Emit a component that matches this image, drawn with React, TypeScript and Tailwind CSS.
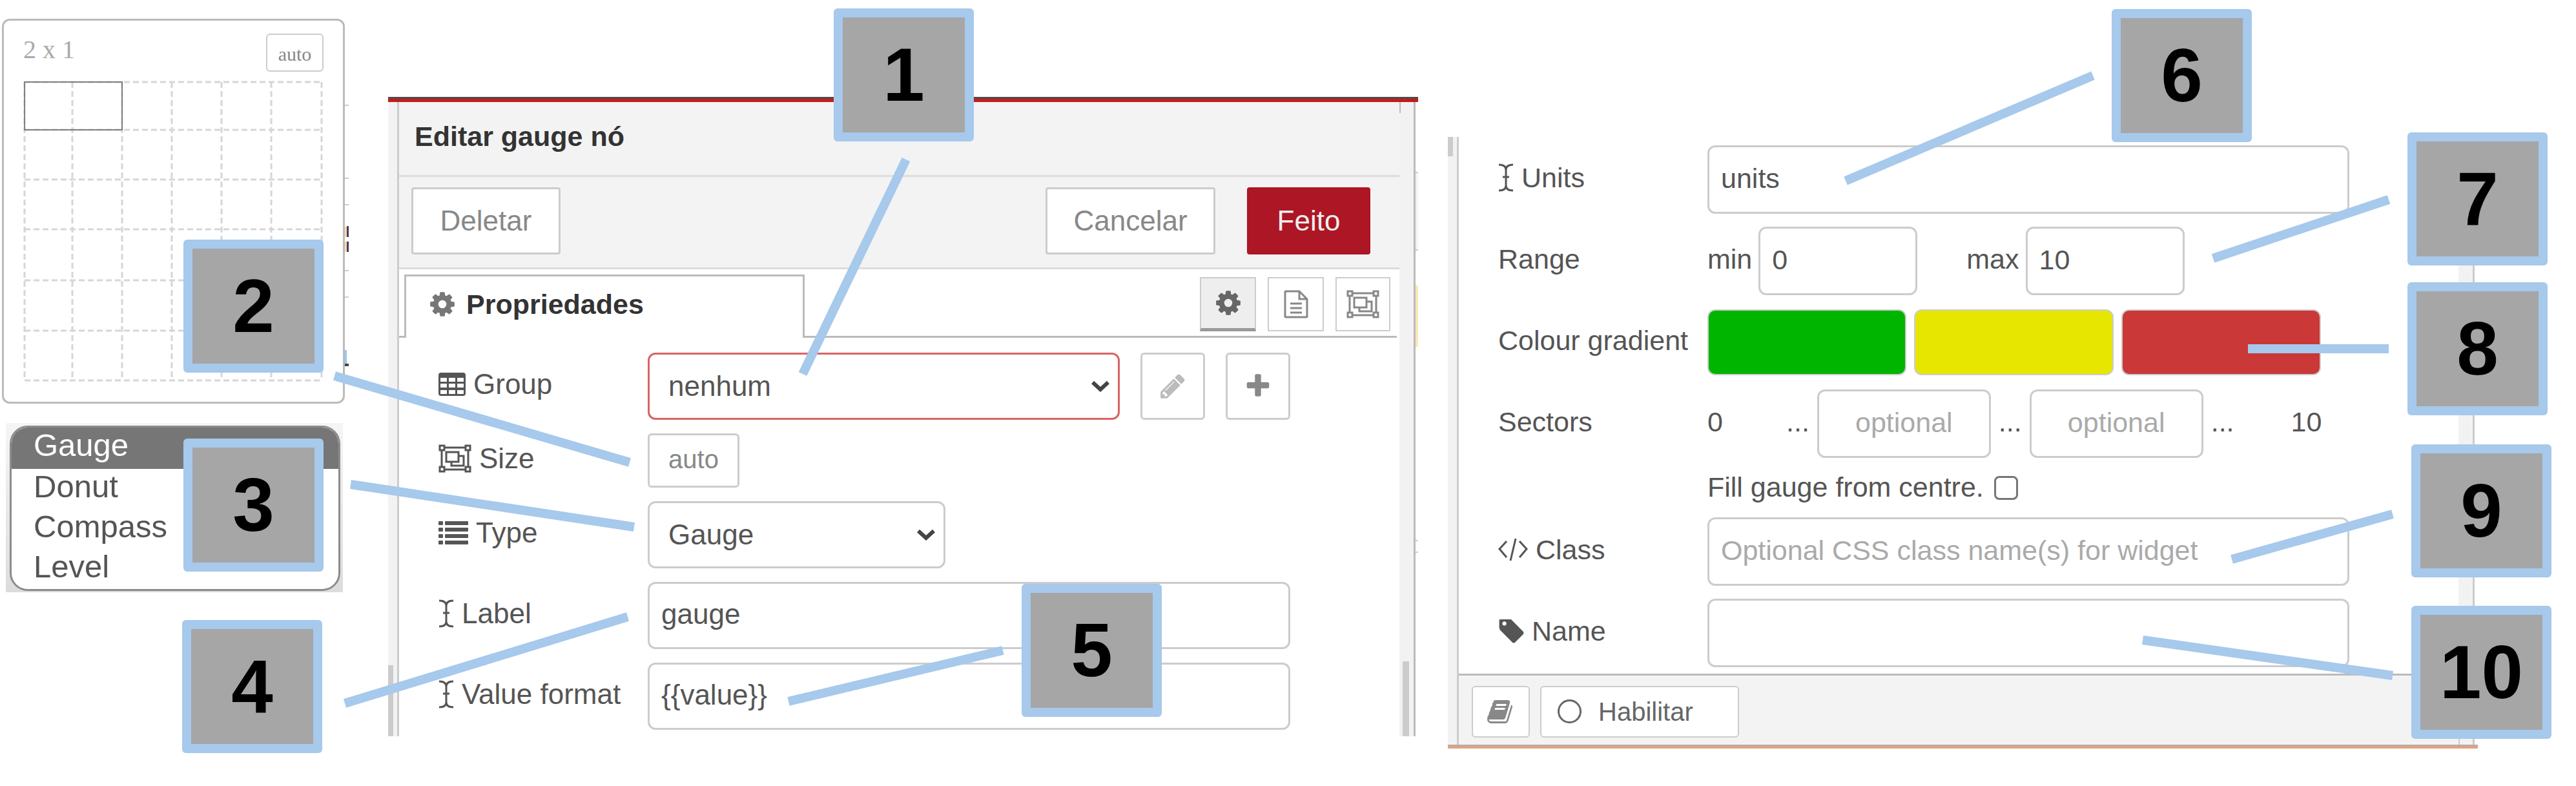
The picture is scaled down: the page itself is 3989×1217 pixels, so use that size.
import type { ReactNode } from "react";

const CANVAS_WIDTH = 3989;
const CANVAS_HEIGHT = 1217;

const badges = [
  { n: 1, x: 1291, y: 13 },
  { n: 2, x: 284, y: 371 },
  { n: 3, x: 284, y: 679 },
  { n: 4, x: 282, y: 960 },
  { n: 5, x: 1582, y: 904 },
  { n: 6, x: 3270, y: 14 },
  { n: 7, x: 3728, y: 205 },
  { n: 8, x: 3728, y: 437 },
  { n: 9, x: 3734, y: 688 },
  { n: 10, x: 3734, y: 938 },
];

const pointers = [
  [1403, 247, 1243, 579],
  [518, 582, 975, 716],
  [543, 750, 982, 816],
  [534, 1089, 972, 955],
  [1221, 1086, 1553, 1007],
  [2858, 280, 3241, 117],
  [3427, 400, 3699, 309],
  [3481, 540, 3699, 540],
  [3456, 866, 3705, 796],
  [3318, 991, 3705, 1046],
];

const fieldClass =
  "h-full min-w-0 rounded-xl border-3 border-[#cccccc] bg-white px-[18px] pb-1 text-[#555555] placeholder:text-[#aaaaaa] placeholder:opacity-100 outline-none";

function Glyph({ d, className }: { d: string; className: string }) {
  return (
    <svg viewBox="0 0 1792 1792" fill="currentColor" className={className} aria-hidden="true">
      <path d={d} />
    </svg>
  );
}

const COG =
  "M1152 896q0-106-75-181t-181-75-181 75-75 181 75 181 181 75 181-75 75-181zm512-109v222q0 12-8 23t-20 13l-185 28q-19 54-39 91 35 50 107 138 10 12 10 25t-9 23q-27 37-99 108t-94 71q-12 0-26-9l-138-108q-44 23-91 38-16 136-29 186-7 28-36 28h-222q-14 0-24.5-8.5t-11.5-21.5l-28-184q-49-16-90-37l-141 107q-10 9-25 9-14 0-25-11-126-114-165-168-7-10-7-23 0-12 8-23 15-21 51-66.5t54-70.5q-27-50-41-99l-183-27q-13-2-21-12.5t-8-23.5v-222q0-12 8-23t19-13l186-28q14-46 39-92-40-57-107-138-10-12-10-24 0-10 9-23 26-36 98.5-107.5t94.5-71.5q13 0 26 10l138 107q44-23 91-38 16-136 29-186 7-28 36-28h222q14 0 24.5 8.5t11.5 21.5l28 184q49 16 90 37l142-107q9-9 24-9 13 0 25 10 129 119 165 170 7 8 7 22 0 12-8 23-15 21-51 66.5t-54 70.5q26 50 41 98l183 28q13 2 21 12.5t8 23.5z";
const PLUS =
  "M1600 736v192q0 40-28 68t-68 28h-416v416q0 40-28 68t-68 28h-192q-40 0-68-28t-28-68v-416h-416q-40 0-68-28t-28-68v-192q0-40 28-68t68-28h416v-416q0-40 28-68t68-28h192q40 0 68 28t28 68v416h416q40 0 68 28t28 68z";
const PENCIL =
  "M491 1536l91-91-235-235-91 91v107h128v128h107zm523-928q0-22-22-22-10 0-17 7l-542 542q-7 7-7 17 0 22 22 22 10 0 17-7l542-542q7-7 7-17zm-54-192l416 416-832 832h-416v-416zm683 96q0 53-37 90l-166 166-416-416 166-165q36-38 90-38 53 0 91 38l235 234q37 39 37 91z";
const BOOK =
  "M1639 478q40 57 18 129l-275 906q-19 64-76.5 107.5t-122.5 43.5h-923q-77 0-148.5-53.5t-99.5-131.5q-24-67-2-127 0-4 3-27t4-37q1-8-3-21.5t-3-19.5q2-11 8-21t16.5-23.5 16.5-23.5q23-38 45-91.5t30-91.5q3-10 .5-30t-.5-28q3-11 17-28t17-23q21-36 42-92t25-90q1-9-2.5-32t.5-28q4-13 22-30.5t22-22.5q19-26 42.5-84.5t27.5-96.5q1-8-3-25.5t-2-26.5q2-8 9-18t18-23 17-21q8-12 16.5-30.5t15-35 16-36 19.5-32 26.5-23.5 36-11.5 47.5 5.5l-1 3q38-9 51-9h761q74 0 114 56t18 130l-274 906q-36 119-71.5 153.5t-128.5 34.5h-869q-27 0-38 15-11 16-1 43 24 70 144 70h923q29 0 56-15.5t35-41.5l300-987q7-22 5-57 38 15 59 43zm-1064 2q-4 13 2 22.5t20 9.5h608q13 0 25.5-9.5t16.5-22.5l21-64q4-13-2-22.5t-20-9.5h-608q-13 0-25.5 9.5t-16.5 22.5zm-83 256q-4 13 2 22.5t20 9.5h608q13 0 25.5-9.5t16.5-22.5l21-64q4-13-2-22.5t-20-9.5h-608q-13 0-25.5 9.5t-16.5 22.5z";

function TableIcon() {
  return (
    <svg viewBox="0 0 42 36" className="h-9 w-[42px]" aria-hidden="true">
      <rect width="42" height="36" rx="4" fill="#555555" />
      {[8, 17, 27].map((y) =>
        [3, 16, 29].map((x) => <rect key={`${x}-${y}`} x={x} y={y} width="10" height="6" fill="#ffffff" />),
      )}
    </svg>
  );
}

function ObjectGroupIcon() {
  return (
    <svg viewBox="0 0 51 44" className="h-11 w-[51px]" fill="none" stroke="currentColor" strokeWidth="3" aria-hidden="true">
      <path d="M9 5h33M9 39h33M5 9v26M46 9v26" />
      <rect x="2" y="2" width="7" height="7" />
      <rect x="42" y="2" width="7" height="7" />
      <rect x="2" y="35" width="7" height="7" />
      <rect x="42" y="35" width="7" height="7" />
      <rect x="12" y="12" width="19" height="15" />
      <path d="M31 18h8v15H20v-6" />
    </svg>
  );
}

function ListIcon() {
  return (
    <svg viewBox="0 0 46 36" className="h-9 w-[46px]" fill="#555555" aria-hidden="true">
      {[0, 10, 20, 30].map((y) => (
        <g key={y}>
          <rect y={y} width="7" height="6" rx="1" />
          <rect x="10" y={y} width="36" height="6" rx="1" />
        </g>
      ))}
    </svg>
  );
}

function CursorIcon() {
  return (
    <svg viewBox="0 0 24 44" className="h-11 w-6" fill="none" stroke="#555555" strokeWidth="3" aria-hidden="true">
      <path d="M1 2q11 0 11 8v24q0 8-11 8M23 2q-11 0-11 8M23 42q-11 0-11-8M7 21h10" />
    </svg>
  );
}

function CodeIcon() {
  return (
    <svg viewBox="0 0 46 36" className="h-9 w-[46px]" fill="none" stroke="#555555" strokeWidth="3" aria-hidden="true">
      <path d="M13 5L2 17l11 13M33 5l11 12-11 13M27 1l-8 34" />
    </svg>
  );
}

function TagIcon() {
  return (
    <svg viewBox="64 192 1600 1472" className="h-[37px] w-10 text-[#555555]" fill="currentColor" aria-hidden="true">
      <path d="M576 448q0-53-37.5-90.500t-90.500-37.500-90.500 37.500-37.500 90.500 37.500 90.500 90.500 37.500 90.500-37.500 37.500-90.500zm1067 576q0 53-37 90l-491 492q-39 37-91 37-53 0-90-37l-715-716q-38-37-64.500-101t-26.500-117v-416q0-52 38-90t90-38h416q53 0 117 26.500t102 64.500l715 714q37 39 37 91z" />
    </svg>
  );
}

function FileIcon() {
  return (
    <svg viewBox="0 0 38 44" className="h-11 w-[38px]" fill="none" stroke="currentColor" strokeWidth="3" aria-hidden="true">
      <path d="M3 2h21l12 12v27a1 1 0 0 1-1 1H3a1 1 0 0 1-1-1V3a1 1 0 0 1 1-1zM24 2v12h12M10 21h18M10 28h18M10 35h18" />
    </svg>
  );
}

function Chevron() {
  return (
    <svg
      viewBox="0 0 28 18"
      className="pointer-events-none absolute top-1/2 right-4 h-[18px] w-7 -translate-y-1/2"
      fill="none"
      stroke="#444444"
      strokeWidth="6"
      aria-hidden="true"
    >
      <path d="M2 3l12 11L26 3" />
    </svg>
  );
}

function Row({
  id,
  icon,
  label,
  height = "h-[104px]",
  children,
}: {
  id: string;
  icon?: ReactNode;
  label: string;
  height?: string;
  children: ReactNode;
}) {
  return (
    <div className={`flex items-center ${height}`}>
      <label htmlFor={id} className="flex w-[324px] shrink-0 items-center gap-3 pb-1.5 whitespace-nowrap">
        {icon}
        {label}
      </label>
      {children}
    </div>
  );
}

function SizePicker() {
  const xs = [2, 76, 153, 230, 307, 384, 462];
  const ys = [2, 76, 153, 230, 309, 387, 464];
  return (
    <section className="relative mr-[67px] ml-[3px] rounded-xl border-3 border-[#bbbbbb] px-[30px] pt-5 pb-[31px] font-['Liberation_Serif',serif]">
      <div className="flex items-start justify-between">
        <span className="text-[40px] leading-[50px] text-[#aaaaaa]">2 x 1</span>
        <button className="h-[59px] w-[89px] rounded-md border-2 border-[#cccccc] bg-white pt-1 text-[30px] leading-none text-[#888888]">
          auto
        </button>
      </div>
      <svg viewBox="0 0 465 466" className="mt-3.5 w-full" fill="none" aria-label="Grid size">
        <g stroke="#d6d6d6" strokeWidth="3" strokeDasharray="9 5">
          {xs.map((x) => (
            <path key={x} d={`M${x} 2V464`} />
          ))}
          {ys.map((y) => (
            <path key={y} d={`M2 ${y}H462`} />
          ))}
        </g>
        <rect x="2" y="2" width="151" height="74" stroke="#808080" strokeWidth="2" />
      </svg>
      <svg viewBox="0 0 6 596" className="absolute -top-[3px] -right-[9px] h-[596px] w-1.5" aria-hidden="true">
        <path d="M0 134h6M0 247h6M0 288h6M0 390h6M0 431h6" stroke="#cccccc" strokeWidth="2" />
        <path d="M0 322h3v16H0zM0 345h3v16H0z" fill="#ffdca0" />
        <path d="M3 321h3v17H3zM3 345h3v16H3z" fill="#4b3a6b" />
        <path d="M0 513h3v21H0z" fill="#8fc8ff" />
        <path d="M0 534h6v4H0z" fill="#444444" />
      </svg>
    </section>
  );
}

function TypeMenu() {
  return (
    <section className="mt-[30px] mr-[70px] ml-[9px] h-[262px] bg-linear-to-b from-[#f5f5f5] to-[#dcdcdc] pt-1 pr-1 pb-0.5 pl-1.5">
      <ul
        role="listbox"
        aria-label="Type"
        className="h-full overflow-hidden rounded-[28px] border-3 border-[#8c8c8c] bg-white text-[49px] leading-[54px] text-[#555555]"
      >
        <li role="option" aria-selected="true" className="h-16 bg-[#767676] pl-[34px] text-white">
          Gauge
        </li>
        <li role="option" aria-selected="false" className="h-[62px] pl-[34px]">
          Donut
        </li>
        <li role="option" aria-selected="false" className="h-[62px] pl-[34px]">
          Compass
        </li>
        <li role="option" aria-selected="false" className="h-[62px] pl-[34px]">
          Level
        </li>
      </ul>
    </section>
  );
}

function EditPanel() {
  return (
    <section className="pt-[150px] pr-[46px]">
      <div className="h-[3px] bg-[#4d4d4d]" />
      <div className="h-[5px] bg-[#c81a1a]" />
      <div className="flex">
        <div className="flex w-3.5 shrink-0 flex-col justify-end bg-[#f2f2f2]">
          <div className="h-[110px] w-2 bg-[#cccccc]" />
        </div>
        <div className="min-w-0 flex-1 border-l-3 border-[#cccccc]">
          <header className="flex h-[116px] items-center border-b-3 border-[#dddddd] bg-[#f3f3f3] pb-2 pl-6">
            <h2 className="text-[43px] font-bold text-[#333333]">Editar gauge nó</h2>
          </header>
          <div className="flex h-[143px] items-center border-b-3 border-[#dddddd] bg-[#f3f3f3] pr-[45px] pb-1 pl-[19px] text-[#888888]">
            <button className="h-[104px] w-[231px] rounded-sm border-3 border-[#cccccc] bg-white">Deletar</button>
            <button className="ml-auto h-[104px] w-[263px] rounded-sm border-3 border-[#cccccc] bg-white">
              Cancelar
            </button>
            <button className="ml-[49px] h-[104px] w-[191px] rounded-sm bg-[#ad1625] text-[#eeeeee]">Feito</button>
          </div>
          <div className="flex h-[106px] items-end pr-1">
            <div className="w-2 border-b-3 border-[#bbbbbb]" />
            <div className="flex h-[98px] w-[620px] items-center gap-[15px] border-3 border-b-0 border-[#bbbbbb] pb-2.5 pl-[34px] text-[43px] font-bold text-[#333333]">
              <Glyph d={COG} className="size-[44px] text-[#777777]" />
              <span>Propriedades</span>
            </div>
            <div className="flex h-full flex-1 items-center justify-end gap-[18px] border-b-3 border-[#bbbbbb] pt-1 pr-2.5 text-[#888888]">
              <button
                aria-label="Propriedades"
                className="flex h-[84px] w-[87px] items-center justify-center border-2 border-b-5 border-[#cccccc] border-b-[#999999] bg-[#eeeeee]"
              >
                <Glyph d={COG} className="size-[44px] text-[#666666]" />
              </button>
              <button
                aria-label="Descrição"
                className="flex h-[84px] w-[87px] items-center justify-center border-2 border-[#cccccc]"
              >
                <FileIcon />
              </button>
              <button
                aria-label="Aparência"
                className="flex h-[84px] w-[85px] items-center justify-center border-2 border-[#cccccc]"
              >
                <ObjectGroupIcon />
              </button>
            </div>
          </div>
          <form className="flex flex-col gap-[21px] pt-[23px] pr-[169px] pb-2.5 pl-[61px]">
            <Row id="group" icon={<TableIcon />} label="Group">
              <div className="flex h-full min-w-0 flex-1 gap-8">
                <div className="relative flex-1">
                  <select
                    id="group"
                    className="h-full w-full appearance-none rounded-xl border-3 border-[#d96464] bg-white pl-[29px] text-[#555555]"
                  >
                    <option>nenhum</option>
                  </select>
                  <Chevron />
                </div>
                <button
                  type="button"
                  aria-label="Editar"
                  className="flex w-[100px] items-center justify-center rounded-md border-3 border-[#cccccc] text-[#bbbbbb]"
                >
                  <Glyph d={PENCIL} className="size-[44px]" />
                </button>
                <button
                  type="button"
                  aria-label="Adicionar"
                  className="flex w-[100px] items-center justify-center rounded-md border-3 border-[#cccccc] text-[#888888]"
                >
                  <Glyph d={PLUS} className="size-[44px]" />
                </button>
              </div>
            </Row>
            <Row id="size" icon={<ObjectGroupIcon />} label="Size" height="h-[84px]">
              <button
                id="size"
                type="button"
                className="h-full w-[142px] rounded-md border-3 border-[#cccccc] pb-1 text-[40px] text-[#888888]"
              >
                auto
              </button>
            </Row>
            <Row id="type" icon={<ListIcon />} label="Type">
              <div className="relative h-full w-[461px]">
                <select
                  id="type"
                  className="h-full w-full appearance-none rounded-xl border-3 border-[#cccccc] bg-white pl-[29px] text-[#555555]"
                >
                  <option>Gauge</option>
                  <option>Donut</option>
                  <option>Compass</option>
                  <option>Level</option>
                </select>
                <Chevron />
              </div>
            </Row>
            <Row id="label" icon={<CursorIcon />} label="Label">
              <input id="label" defaultValue="gauge" className={`${fieldClass} flex-1`} />
            </Row>
            <Row id="format" icon={<CursorIcon />} label="Value format">
              <input id="format" defaultValue="{{value}}" className={`${fieldClass} flex-1`} />
            </Row>
          </form>
        </div>
        <div className="flex w-[22px] shrink-0 flex-col items-start bg-[#f2f2f2]">
          <div className="h-[17px] w-0.5 bg-[#bbbbbb]" />
          <div className="mt-auto ml-[5px] h-[116px] w-2.5 bg-[#cccccc]" />
        </div>
        <div className="w-[3px] shrink-0 bg-[#bbbbbb]" />
        <div className="flex w-1 shrink-0 flex-col">
          <div className="mt-[108px] h-[122px] border-y-2 border-[#cccccc] bg-[#f3f3f3]" />
          <div className="mt-[54px] h-[95px] bg-[#ffe6b8]" />
          <div className="mt-[299px] h-5 border-y-2 border-[#cccccc]" />
        </div>
      </div>
    </section>
  );
}

function OptionsPanel() {
  return (
    <section className="pt-[212px] text-[43px]">
      <div className="flex">
        <div className="w-3.5 shrink-0 bg-[#f2f2f2]">
          <div className="h-[30px] w-2 bg-[#cccccc]" />
        </div>
        <div className="min-w-0 flex-1 border-l-3 border-[#cccccc]">
          <form className="flex flex-col gap-5 pt-[13px] pr-[169px] pb-2.5 pl-[61px]">
            <Row id="units" icon={<CursorIcon />} label="Units" height="h-[106px]">
              <input id="units" defaultValue="units" className={`${fieldClass} flex-1`} />
            </Row>
            <Row id="min" label="Range" height="h-[106px]">
              <div className="flex h-full items-center gap-2.5">
                <label htmlFor="min" className="pb-1.5">
                  min
                </label>
                <input id="min" inputMode="numeric" defaultValue="0" className={`${fieldClass} w-[246px]`} />
                <label htmlFor="max" className="ml-[66px] pb-1.5">
                  max
                </label>
                <input id="max" inputMode="numeric" defaultValue="10" className={`${fieldClass} w-[246px]`} />
              </div>
            </Row>
            <Row id="low" label="Colour gradient" height="h-[106px]">
              <div className="flex gap-3">
                <button
                  id="low"
                  type="button"
                  aria-label="Green"
                  className="h-[102px] w-[308px] rounded-xl border-2 border-[#cccccc] bg-[#00b500]"
                />
                <button
                  type="button"
                  aria-label="Yellow"
                  className="h-[102px] w-[309px] rounded-xl border-2 border-[#cccccc] bg-[#e6e600]"
                />
                <button
                  type="button"
                  aria-label="Red"
                  className="h-[102px] w-[309px] rounded-xl border-2 border-[#cccccc] bg-[#ca3838]"
                />
              </div>
            </Row>
            <Row id="sector1" label="Sectors" height="h-[106px]">
              <div className="flex h-full items-center gap-3">
                <span className="w-[110px] pb-1.5">0</span>
                <span className="pb-1.5">...</span>
                <input id="sector1" placeholder="optional" className={`${fieldClass} w-[269px] text-center`} />
                <span className="pb-1.5">...</span>
                <input
                  aria-label="Sector 2"
                  placeholder="optional"
                  className={`${fieldClass} w-[269px] text-center`}
                />
                <span className="pb-1.5">...</span>
                <span className="ml-[76px] pb-1.5">10</span>
              </div>
            </Row>
            <div className="flex h-[52px] items-center gap-4 pl-[324px]">
              <label htmlFor="fill" className="pb-0.5">
                Fill gauge from centre.
              </label>
              <input
                id="fill"
                type="checkbox"
                className="size-[37px] appearance-none rounded-lg border-3 border-[#767676] bg-white"
              />
            </div>
            <Row id="class" icon={<CodeIcon />} label="Class" height="h-[106px]">
              <input
                id="class"
                placeholder="Optional CSS class name(s) for widget"
                className={`${fieldClass} flex-1`}
              />
            </Row>
            <Row id="name" icon={<TagIcon />} label="Name" height="h-[106px]">
              <input id="name" className={`${fieldClass} flex-1`} />
            </Row>
          </form>
          <footer className="flex h-[110px] items-center gap-4 border-t-3 border-[#bbbbbb] bg-[#f3f3f3] pt-1 pl-5">
            <button
              aria-label="Ajuda"
              className="flex h-20 w-[90px] items-center justify-center rounded-md border-2 border-[#cccccc] bg-white text-[#888888]"
            >
              <Glyph d={BOOK} className="size-[42px]" />
            </button>
            <button className="flex h-20 w-[308px] items-center gap-[26px] rounded-md border-2 border-[#cccccc] bg-white pl-[25px] text-[40px] text-[#666666]">
              <svg
                viewBox="0 0 37 37"
                className="size-[37px]"
                fill="none"
                stroke="currentColor"
                strokeWidth="3"
                aria-hidden="true"
              >
                <circle cx="18.5" cy="18.5" r="17" />
              </svg>
              Habilitar
            </button>
          </footer>
        </div>
        <div className="flex w-[22px] shrink-0 flex-col justify-end bg-[#f2f2f2]">
          <div className="h-[110px] w-0.5 bg-[#cccccc]" />
        </div>
        <div className="mr-[5px] w-[3px] shrink-0 bg-[#cccccc]" />
      </div>
      <div className="h-0.5 bg-[#bbaaa3]" />
      <div className="h-1 bg-[#e0a284]" />
    </section>
  );
}

function Annotations() {
  return (
    <div className="pointer-events-none absolute inset-x-0 top-0 h-[1217px]">
      <svg
        viewBox={`0 0 ${CANVAS_WIDTH} ${CANVAS_HEIGHT}`}
        preserveAspectRatio="none"
        className="h-full w-full"
        stroke="#a6c9ec"
        strokeWidth="14"
        aria-hidden="true"
      >
        {pointers.map(([x1, y1, x2, y2]) => (
          <line key={`${x1}-${y1}`} x1={x1} y1={y1} x2={x2} y2={y2} />
        ))}
      </svg>
      {badges.map(({ n, x, y }) => (
        <div
          key={n}
          className="absolute flex h-[206px] w-[217px] items-center justify-center rounded-md bg-[#a6c9ec] p-3.5"
          style={{ left: `${(x / CANVAS_WIDTH) * 100}%`, top: y }}
        >
          <span className="flex h-full w-full items-center justify-center bg-[#a6a6a6] text-[116px] leading-none font-bold text-black">
            {n}
          </span>
        </div>
      ))}
    </div>
  );
}

export default function App() {
  return (
    <main className="relative min-h-screen overflow-hidden bg-white font-['Liberation_Sans',Arial,sans-serif] text-[44px] leading-[52px] text-[#555555]">
      <div className="grid grid-cols-[601fr_1641fr_1595fr_152fr]">
        <aside className="min-w-0 pt-[29px]">
          <SizePicker />
          <TypeMenu />
        </aside>
        <EditPanel />
        <OptionsPanel />
      </div>
      <Annotations />
    </main>
  );
}
